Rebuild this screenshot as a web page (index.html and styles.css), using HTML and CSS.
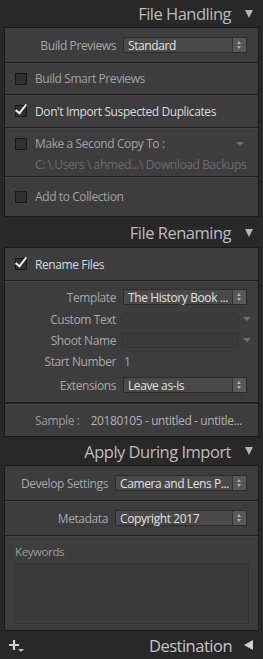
FILE: index.html
```html
<!DOCTYPE html>
<html lang="en">
<head>
  <meta charset="UTF-8">
  <title>Import Options</title>
  <link rel="stylesheet" href="styles.css">
</head>
<body>

  <div class="section-head">
    <span class="head-title">File Handling</span>
    <span class="tri-down"></span>
  </div>
  <div class="panel">
    <div class="row field-row r-previews">
      <span class="label">Build Previews</span>
      <div class="select"><span class="select-text">Standard</span><span class="spin"></span></div>
    </div>
    <div class="row check-row r-smart">
      <span class="box"></span>
      <span class="check-text dim">Build Smart Previews</span>
    </div>
    <div class="row check-row r-dupes">
      <span class="box checked"></span>
      <span class="check-text on">Don't Import Suspected Duplicates</span>
    </div>
    <div class="row r-copy">
      <div class="check-line">
        <span class="box"></span>
        <span class="check-text dim">Make a Second Copy To :</span>
        <span class="mini-arrow"></span>
      </div>
      <div class="path">C: \ Users \ ahmed...\ Download Backups</div>
    </div>
    <div class="row check-row r-collection">
      <span class="box"></span>
      <span class="check-text dim">Add to Collection</span>
    </div>
  </div>

  <div class="section-head h2">
    <span class="head-title">File Renaming</span>
    <span class="tri-down"></span>
  </div>
  <div class="panel">
    <div class="row check-row r-rename">
      <span class="box checked"></span>
      <span class="check-text on">Rename Files</span>
    </div>
    <div class="row fields">
      <div class="field-row">
        <span class="label">Template</span>
        <div class="select"><span class="select-text">The History Book ...</span><span class="spin"></span></div>
      </div>
      <div class="field-row">
        <span class="label">Custom Text</span>
        <div class="blank"></div>
        <span class="mini-arrow"></span>
      </div>
      <div class="field-row">
        <span class="label">Shoot Name</span>
        <div class="blank"></div>
        <span class="mini-arrow"></span>
      </div>
      <div class="field-row">
        <span class="label">Start Number</span>
        <span class="plain">1</span>
      </div>
      <div class="field-row">
        <span class="label">Extensions</span>
        <div class="select"><span class="select-text">Leave as-is</span><span class="spin"></span></div>
      </div>
    </div>
    <div class="row r-sample">
      <span class="sample-label">Sample :</span>
      <span class="sample-value">20180105 - untitled - untitle...</span>
    </div>
  </div>

  <div class="section-head h3">
    <span class="head-title">Apply During Import</span>
    <span class="tri-down"></span>
  </div>
  <div class="panel apply">
    <div class="row field-row r-develop">
      <span class="label">Develop Settings</span>
      <div class="select"><span class="select-text">Camera and Lens P...</span><span class="spin"></span></div>
    </div>
    <div class="row field-row r-meta">
      <span class="label">Metadata</span>
      <div class="select"><span class="select-text">Copyright 2017</span><span class="spin"></span></div>
    </div>
    <div class="row r-keywords">
      <div class="kw-label">Keywords</div>
      <div class="kw-box"></div>
    </div>
  </div>

  <div class="footer">
    <svg class="plus" width="16" height="14" viewBox="0 0 16 14">
      <path d="M5 1v10M0 6h10" stroke="#cfcfcf" stroke-width="2.2" fill="none"/>
      <path d="M9 10h6l-3 3z" fill="#bdbdbd"/>
    </svg>
    <span class="head-title">Destination</span>
    <span class="tri-left"></span>
  </div>

</body>
</html>
```

FILE: styles.css
```css
body {
  margin: 0;
  background: #282828;
  font-family: "Open Sans", "Noto Sans", sans-serif;
  font-size: 12px;
  letter-spacing: -0.4px;
  color: #ababab;
  width: 263px;
  height: 659px;
  overflow: hidden;
}

.section-head {
  height: 27px;
  display: flex;
  align-items: center;
  justify-content: flex-end;
  padding-right: 10px;
}
.section-head.h2 { height: 29px; padding-top: 1px; }
.section-head.h3 { height: 28px; }

.head-title {
  font-size: 16.5px;
  letter-spacing: -0.5px;
  color: #bcbcbc;
}
.tri-down {
  width: 0;
  height: 0;
  margin-left: 14px;
  border-left: 4.5px solid transparent;
  border-right: 4.5px solid transparent;
  border-top: 8px solid #b5b5b5;
}
.tri-left {
  width: 0;
  height: 0;
  margin-left: 12px;
  border-top: 5px solid transparent;
  border-bottom: 5px solid transparent;
  border-right: 9px solid #d0d0d0;
}

.panel {
  margin: 0 4px;
  background: #3d3d3d;
  border: 1px solid #191919;
}

.row {
  border-top: 1px solid #1f1f1f;
  box-shadow: inset 0 1px 0 #444;
}
.row:first-child {
  border-top: none;
  box-shadow: none;
}

.field-row {
  display: flex;
  align-items: center;
}
.label {
  width: 111px;
  text-align: right;
  color: #a8a8a8;
  flex: none;
  white-space: nowrap;
}
.select {
  margin-left: 7px;
  width: 124px;
  height: 16px;
  box-sizing: border-box;
  background: #494949;
  border: 1px solid #2c2c2c;
  display: flex;
  align-items: center;
  flex: none;
}
.select-text {
  flex: 1;
  padding-left: 4px;
  color: #e0e0e0;
  font-size: 12px;
  letter-spacing: -0.4px;
  white-space: nowrap;
  overflow: hidden;
}
.spin {
  width: 13px;
  height: 14px;
  flex: none;
  background: #585858;
  border-left: 1px solid #333;
  position: relative;
}
.spin::before, .spin::after {
  content: "";
  position: absolute;
  left: 4px;
  border-left: 2.5px solid transparent;
  border-right: 2.5px solid transparent;
}
.spin::before { top: 3px; border-bottom: 3px solid #b0b0b0; }
.spin::after { top: 8px; border-top: 3px solid #b0b0b0; }

.r-previews { height: 34px; }

.check-row {
  display: flex;
  align-items: center;
  padding-left: 10px;
}
.box {
  width: 10px;
  height: 10px;
  flex: none;
  background: #303030;
  border: 1px solid #171717;
  position: relative;
}
.box.checked::after {
  content: "";
  position: absolute;
  left: 2px;
  top: -4px;
  width: 4px;
  height: 10px;
  border-right: 2px solid #f0f0f0;
  border-bottom: 2px solid #f0f0f0;
  transform: rotate(38deg);
}
.check-text {
  margin-left: 8px;
  white-space: nowrap;
}
.check-text.dim { color: #a2a2a2; }
.check-text.on { color: #dadada; }

.r-smart { height: 31px; }
.r-dupes { height: 32px; }
.r-copy {
  height: 49px;
  box-sizing: border-box;
  padding: 7px 0 0 10px;
}
.check-line {
  display: flex;
  align-items: center;
}
.mini-arrow {
  width: 0;
  height: 0;
  margin-left: auto;
  margin-right: 14px;
  border-left: 4px solid transparent;
  border-right: 4px solid transparent;
  border-top: 4px solid #6e6e6e;
}
.path {
  margin-left: 20px;
  margin-top: 4px;
  color: #6c6c6c;
  white-space: nowrap;
}
.r-collection { height: 39px; }

.r-rename { height: 32px; }
.fields {
  height: 122px;
  box-sizing: border-box;
  padding-top: 7px;
  display: flex;
  flex-direction: column;
  gap: 5px;
}
.fields .field-row { height: 16px; }
.fields .field-row:first-child { height: 18px; }
.fields .field-row:last-child { height: 18px; margin-top: 2px; }
.blank {
  margin-left: 5px;
  width: 118px;
  height: 15px;
  background: #3a3a3a;
  border: 1px solid #363636;
  box-sizing: border-box;
}
.fields .mini-arrow { margin-left: 4px; margin-right: 0; }
.plain {
  margin-left: 8px;
  color: #a8a8a8;
}
.r-sample {
  height: 32px;
  display: flex;
  align-items: center;
  padding-left: 30px;
  border-top: 2px solid #1f1f1f;
  white-space: nowrap;
}
.sample-label { color: #9a9a9a; }
.sample-value {
  margin-left: 11px;
  color: #b2b2b2;
}

.apply .label { width: 103px; }
.apply .select { width: 132px; }
.r-develop { height: 34px; }
.r-meta { height: 34px; }
.r-keywords {
  height: 95px;
  box-sizing: border-box;
  padding: 8px 9px 0 9px;
}
.kw-label {
  font-size: 11.5px;
  color: #9e9e9e;
  margin-left: 1px;
}
.kw-box {
  margin-top: 4px;
  height: 59px;
  background: #3b3b3b;
  border: 1px solid #353535;
}

.footer {
  height: 28px;
  display: flex;
  align-items: center;
  padding: 0 10px 0 9px;
}
.footer .plus { margin-right: auto; margin-top: 2px; }
.footer .head-title { color: #c6c6c6; }
```
